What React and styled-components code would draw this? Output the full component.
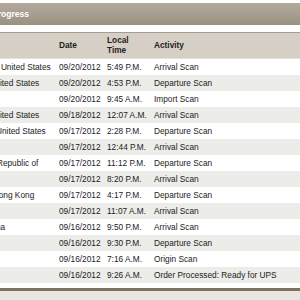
import React from "react";
import styled, { createGlobalStyle } from "styled-components";

const GlobalStyle = createGlobalStyle`
  html, body {
    margin: 0;
    padding: 0;
    background: #ffffff;
    overflow: hidden;
  }
  body {
    font-family: "Liberation Sans", Arial, Helvetica, sans-serif;
  }
`;

const Page = styled.div`
  width: 420px;
  margin-left: -68px;
  padding-top: 3px;
`;

const TitleBar = styled.div`
  height: 22px;
  display: flex;
  align-items: center;
  padding-left: 19px;
  background: linear-gradient(#b3aa9e, #9b9182);
  color: #ffffff;
  font-size: 8.5px;
  font-weight: bold;
`;

const Table = styled.table`
  margin-top: 7px;
  width: 100%;
  border-collapse: collapse;
  table-layout: fixed;
  font-size: 8.3px;
  color: #222222;
`;

const HeadRow = styled.tr`
  background: #d6cfc5;
  border-top: 1px solid #a59c8f;
  border-bottom: 1px solid #e4dfd8;
`;

const Th = styled.th`
  height: 25px;
  padding: 0 4px;
  text-align: left;
  vertical-align: middle;
  font-weight: bold;
  line-height: 9.4px;
  color: #1e1e1e;
`;

const Row = styled.tr`
  background: ${(p) => (p.$shaded ? "#ecece8" : "#ffffff")};
`;

const Td = styled.td`
  height: 16px;
  padding: 0 4px;
  white-space: nowrap;
  overflow: hidden;
  line-height: 16px;
`;

const Footer = styled.div`
  margin-top: 5px;
  height: 12px;
  border-top: 3px solid #7e7262;
  background: #e9e6e1;
`;

const scans = [
  ["Philadelphia, PA, United States", "09/20/2012", "5:49 P.M.", "Arrival Scan"],
  ["Louisville, KY, United States", "09/20/2012", "4:53 P.M.", "Departure Scan"],
  ["", "09/20/2012", "9:45 A.M.", "Import Scan"],
  ["Louisville, KY, United States", "09/18/2012", "12:07 A.M.", "Arrival Scan"],
  ["Anchorage, AK, United States", "09/17/2012", "2:28 P.M.", "Departure Scan"],
  ["", "09/17/2012", "12:44 P.M.", "Arrival Scan"],
  ["Incheon, Korea, Republic of", "09/17/2012", "11:12 P.M.", "Departure Scan"],
  ["", "09/17/2012", "8:20 P.M.", "Arrival Scan"],
  ["Chek Lap Kok, Hong Kong", "09/17/2012", "4:17 P.M.", "Departure Scan"],
  ["", "09/17/2012", "11:07 A.M.", "Arrival Scan"],
  ["Guangzhou, China", "09/16/2012", "9:50 P.M.", "Arrival Scan"],
  ["", "09/16/2012", "9:30 P.M.", "Departure Scan"],
  ["", "09/16/2012", "7:16 A.M.", "Origin Scan"],
  ["", "09/16/2012", "9:26 A.M.", "Order Processed: Ready for UPS"],
];

const App = () => {
  return (
    <Page>
      <GlobalStyle />
      <TitleBar>Shipment Progress</TitleBar>
      <Table>
        <colgroup>
          <col style={{ width: 123 }} />
          <col style={{ width: 48 }} />
          <col style={{ width: 47 }} />
          <col />
        </colgroup>
        <thead>
          <HeadRow>
            <Th>Location</Th>
            <Th>Date</Th>
            <Th>Local Time</Th>
            <Th>Activity</Th>
          </HeadRow>
        </thead>
        <tbody>
          {scans.map((scan, i) => (
            <Row key={i} $shaded={i % 2 === 1}>
              <Td>{scan[0]}</Td>
              <Td>{scan[1]}</Td>
              <Td>{scan[2]}</Td>
              <Td>{scan[3]}</Td>
            </Row>
          ))}
        </tbody>
      </Table>
      <Footer />
    </Page>
  );
};

export default App;
